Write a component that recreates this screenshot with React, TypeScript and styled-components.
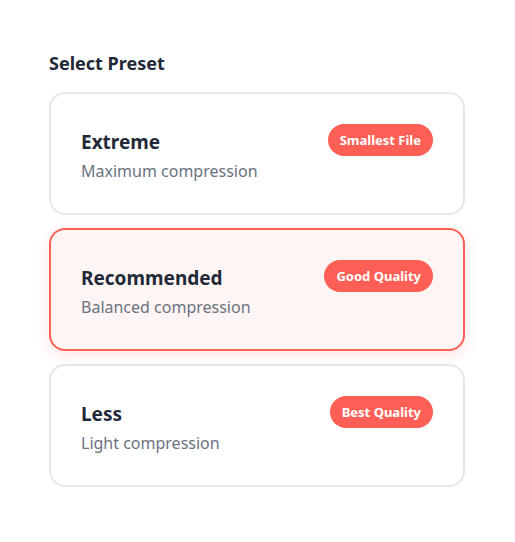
import React from "react";
import styled, { createGlobalStyle } from "styled-components";

const Global = createGlobalStyle`
  * { box-sizing: border-box; }
  body { margin: 0; background: #ffffff; font-family: "Noto Sans", "Open Sans", sans-serif; }
`;

const Page = styled.div`
  padding: 50px 50px 40px 49px;
`;

const Heading = styled.h2`
  margin: 0 0 16px;
  font-size: 18px;
  font-weight: 700;
  line-height: 26px;
  color: #1f2937;
`;

const List = styled.div`
  display: flex;
  flex-direction: column;
  gap: 13px;
`;

const Card = styled.div<{ $selected?: boolean }>`
  display: flex;
  justify-content: space-between;
  align-items: flex-start;
  padding: 30px;
  border-radius: 16px;
  border: 2px solid ${(p) => (p.$selected ? "#ff5f55" : "#e5e7eb")};
  background: ${(p) => (p.$selected ? "#fff5f5" : "#ffffff")};
  box-shadow: ${(p) => (p.$selected ? "0 4px 14px rgba(255, 95, 85, 0.18)" : "none")};
`;

const Info = styled.div`
  display: flex;
  flex-direction: column;
  gap: 3px;
  padding-top: 4px;
`;

const Title = styled.div`
  font-size: 19px;
  font-weight: 700;
  line-height: 28px;
  color: #1f2937;
`;

const Desc = styled.div`
  font-size: 16px;
  line-height: 24px;
  color: #6b7280;
`;

const Badge = styled.span`
  background: #ff5f55;
  color: #ffffff;
  font-size: 13px;
  font-weight: 700;
  line-height: 32px;
  height: 32px;
  padding: 0 12px;
  border-radius: 999px;
  white-space: nowrap;
`;

const presets = [
  { title: "Extreme", desc: "Maximum compression", badge: "Smallest File" },
  { title: "Recommended", desc: "Balanced compression", badge: "Good Quality", selected: true },
  { title: "Less", desc: "Light compression", badge: "Best Quality" },
];

export default function App() {
  return (
    <>
      <Global />
      <Page>
        <Heading>Select Preset</Heading>
        <List>
          {presets.map((p) => (
            <Card key={p.title} $selected={p.selected}>
              <Info>
                <Title>{p.title}</Title>
                <Desc>{p.desc}</Desc>
              </Info>
              <Badge>{p.badge}</Badge>
            </Card>
          ))}
        </List>
      </Page>
    </>
  );
}
